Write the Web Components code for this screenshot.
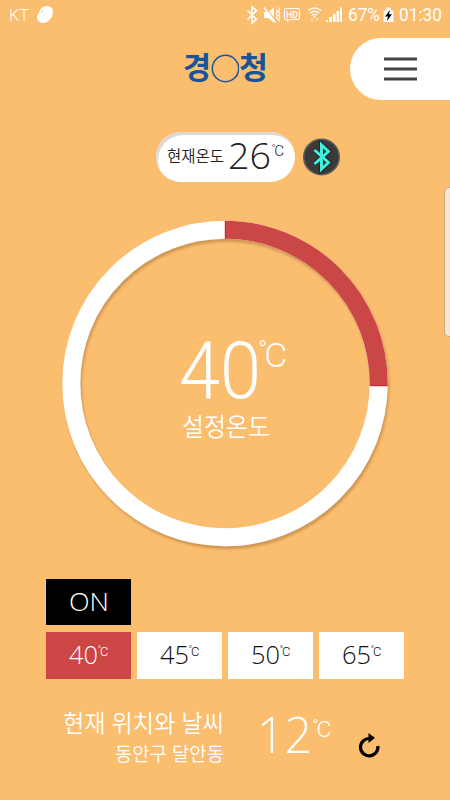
<!DOCTYPE html>
<html lang="ko">
<head>
<meta charset="utf-8">
<title>온도 조절</title>
<style>
html,body{margin:0;height:100%;background:#fbbd6e}
body{font-family:"Open Sans","Noto Sans CJK KR",sans-serif;overflow:hidden}
</style>
</head>
<body>
<heat-app></heat-app>
<script>
const define = (name, html) => {
  const t = document.createElement('template');
  t.innerHTML = html;
  customElements.define(name, class extends HTMLElement {
    constructor() {
      super();
      this.attachShadow({mode: 'open'}).append(t.content.cloneNode(true));
    }
  });
};

/* One line of text stretched to a given advance width. */
customElements.define('fit-text', class extends HTMLElement {
  connectedCallback() {
    const a = (n, d) => this.getAttribute(n) || d;
    const root = this.attachShadow({mode: 'open'});
    root.innerHTML = `<style>
      :host{display:block;flex:none;width:${a('len')}px;height:${a('h')}px}
      svg{display:block;overflow:visible}
      text{font-family:${a('font', "'Open Sans'")},'Noto Sans CJK KR',sans-serif;font-weight:${a('weight', '300')};fill:currentColor}
      </style><svg width="${a('len')}" height="${a('h')}"><text x="0" y="${a('base')}" font-size="${a('size')}" textLength="${a('len')}" lengthAdjust="spacingAndGlyphs"></text></svg>`;
    root.querySelector('text').textContent = a('value', '');
  }
});

/* Degree unit: a small ring tucked against a wide, light C. */
customElements.define('deg-unit', class extends HTMLElement {
  connectedCallback() {
    const s = +this.getAttribute('size'), b = +this.getAttribute('base');
    this.attachShadow({mode: 'open'}).innerHTML = `<style>
      :host{display:block;flex:none;width:${s * .86}px;height:${b + 4}px}
      svg{display:block;overflow:visible}
      text{font-family:Roboto,sans-serif;font-weight:300;fill:currentColor}
      </style><svg width="${s * .86}" height="${b + 4}"><text y="${b - .27 * s}" x="${-.03 * s}" font-size="${s * .75}">°<tspan x="${.16 * s}" y="${b}" font-size="${s}" textLength="${.7 * s}" lengthAdjust="spacingAndGlyphs">C</tspan></text></svg>`;
  }
});

define('status-bar', `<style>
:host{display:flex;height:32px;color:#fff;padding-left:9px}
svg{display:block;flex:none}
.gap{flex:1}
.kt{margin-right:7px}
.pct{margin-left:5px}
.clock{margin:0 8px 0 4px}
</style>
<fit-text class="kt" font="Roboto" value="KT" len="20" h="32" base="21" size="17"></fit-text>
<svg width="18" height="32" viewBox="36 0 18 32"><path d="M46 6C50.500 5.500 53.500 8.500 53 12.500C52.500 17.500 48.500 22.800 43.500 23C39.500 23.200 36.800 20.500 37 17C37.200 14.500 39 13.500 39.500 11.500C40.300 8.500 42.500 6.400 46 6z" fill="#fff"/><path d="M41.500 12.500c.2-1.500.9-2.500 2-3.200" stroke="#fbbd6e" fill="none"/></svg>
<span class="gap"></span>
<svg width="97" height="32" viewBox="246 0 97 32" fill="none" stroke="#fff">
<path d="M247.500 10.500l9 9-4.500 3.500V7l4.500 3.500-9 9" stroke-width="1.600"/>
<path d="M264 12h4l6-4.500v15l-6-4.500h-4z" fill="#fff" stroke="none"/><path d="M265 7l11 14.500" stroke="#fbbd6e" stroke-width="1.500"/><path d="M264 7.500l11.500 15" stroke-width="1.500"/><path d="M276.200 9.500l1.300 2-1.300 2 1.300 2-1.300 2 1.300 2m1-12l1.300 2-1.300 2 1.300 2-1.300 2 1.300 2-1.300 2 1.300 2" stroke-width="1.200"/>
<path d="M286 8.500h12q1.500 0 1.500 1.500v8q0 1.500-1.500 1.500h-8.500l-2 2v-2H286q-1.500 0-1.500-1.500v-8q0-1.500 1.500-1.500z" stroke-width="1"/>
<text x="286" y="17.500" font-size="9.500" font-weight="500" font-family="Roboto" textLength="12" lengthAdjust="spacingAndGlyphs" fill="#fff" stroke="none">HD</text>
<path d="M308 10.500q6.500-5 13 0M310 13q4.500-3.500 9 0M312 15.300q2.500-1.800 5 0" stroke-width="1.400"/><path d="M312 18v3.500m-1.500-1.500l1.500 1.500 1.500-1.500M317 21.500V18m-1.500 1.500L317 18l1.500 1.500" stroke-width="1" opacity=".5"/><circle cx="314.500" cy="17" r="1" fill="#fff" stroke="none"/>
<path d="M326 22v-2h2v2zm3.200 0v-5h2.800v5zm3.800 0V14h2.600v8zm3.600 0V11h2.500v11zm3.400 0V7.500h2V22z" fill="#fff" stroke="none"/></svg>
<fit-text class="pct" font="Roboto" weight="400" value="67%" len="32" h="32" base="21.300" size="17.500"></fit-text>
<svg style="margin-left:3px" width="12" height="32" viewBox="383 0 12 32"><path d="M386 7.500h5v3h2.500V22h-10V10.500h2.500z" fill="#fff" opacity=".95"/><path d="M390 10l-5 6.500h3l-1.300 4.800 5.300-7h-3z" fill="#000"/></svg>
<fit-text class="clock" font="Roboto" weight="400" value="01:30" len="43" h="32" base="21.300" size="17.500"></fit-text>`);

define('brand-header', `<style>
:host{display:flex;height:62px;padding:6px 0 0 183px;align-items:flex-start}
svg{display:block;flex:none}
.logo{display:flex;width:84px;padding-top:13px;color:#16549c}
button{all:unset;margin-left:auto;width:100px;height:62px;border-radius:31px 0 0 31px;background:#fff;display:flex;align-items:center}
button svg{margin-left:34px}
</style>
<div class="logo"><fit-text value="경" len="28" h="32" base="28" size="31" weight="700" font="'Noto Sans CJK KR'"></fit-text>
<svg width="28" height="32"><circle cx="14.500" cy="17.500" r="13.200" fill="none" stroke="#16549c" stroke-width="1.500"/></svg>
<fit-text value="청" len="29" h="32" base="28" size="31" weight="700" font="'Noto Sans CJK KR'"></fit-text></div>
<button aria-label="menu"><svg width="33" height="24"><path d="M0 2h33M0 12h33M0 22h33" stroke="#444" stroke-width="3"/></svg></button>`);

define('current-temp', `<style>
:host{display:flex;height:50px;padding:32px 0 0 156px;color:#222}
.pill{box-sizing:border-box;width:139px;height:50px;border-radius:25px;background:#fff;box-shadow:inset 2px 3px 1px #dcd8d4;display:flex;padding-left:11px}
.n{margin-left:4px}.c{margin-left:1px}
svg{display:block;margin-left:8px}
</style>
<div class="pill"><fit-text value="현재온도" len="57" h="50" base="29.500" size="16" weight="350"></fit-text>
<fit-text class="n" value="26" len="43" h="50" base="36.800" size="37"></fit-text>
<deg-unit class="c" base="24" size="14"></deg-unit></div>
<svg width="38" height="50" viewBox="0 0 38 50"><circle cx="18.500" cy="25" r="17.800" fill="#3b3838" stroke="#62605e" stroke-width="1.500"/><path d="M11.500 18L26 30.500l-7.500 7V12.500l7.500 7L11.500 32" fill="none" stroke="#1c2424" stroke-width="4.500"/><path d="M11.500 18L25.500 30.500l-7 6.500V13l7 6.500L11.500 32" fill="none" stroke="#40f0dd" stroke-width="3"/></svg>`);

define('temp-dial', `<style>
:host{display:grid;width:340px;height:340px;margin:30px 0 0 55px;color:#fff}
svg,.read{grid-area:1/1}
svg{display:block}
.read{padding:120px 0 0 124px}
.row{display:flex}
.c{margin-left:-2px}
</style>
<svg width="340" height="340" viewBox="55 212 340 340">
<defs><filter id="s" x="-10%" y="-10%" width="120%" height="120%"><feDropShadow dx="1.500" dy="3" stdDeviation="1" flood-color="#8a5a20" flood-opacity=".38"/></filter></defs>
<g fill="none" stroke-width="18" filter="url(#s)"><circle cx="225" cy="383.500" r="153.700" stroke="#fff"/><path d="M225 229.800A153.700 153.700 0 0 1 378.700 383.500V386" stroke="#cb4645"/></g>
<path d="M225.300 221v18M370 385.700h17.500" stroke="#c32427"/></svg>
<div class="read"><div class="row"><fit-text value="40" len="82" h="80" base="65.500" size="80" font="Roboto"></fit-text>
<deg-unit class="c" base="34.500" size="33"></deg-unit></div>
<fit-text style="margin-left:3px" value="설정온도" len="88" h="34" base="23.500" size="25" weight="350"></fit-text></div>`);

define('temp-button', `<style>
:host{display:flex;width:85px;height:47px;background:#fff;color:#111}
:host([on]){background:#cb4645;color:#fff}
.wrap{display:flex;padding-left:23px}
</style><div class="wrap"><slot></slot><deg-unit base="23.500" size="12"></deg-unit></div>`);

define('temp-controls', `<style>
:host{display:grid;grid-template-columns:repeat(4,85px);gap:7px 6.250px;margin:27px 0 0 45.600px}
.power{grid-column:1/-1;width:85px;height:46px;background:#000;color:#fff;display:flex;padding-left:23px;box-sizing:border-box}
</style>
<div class="power"><fit-text value="ON" len="40" h="46" base="31.500" size="26.500"></fit-text></div>
<temp-button on><fit-text value="40" len="29" h="47" base="31.500" size="25.500"></fit-text></temp-button>
<temp-button><fit-text value="45" len="29" h="47" base="31.500" size="25.500"></fit-text></temp-button>
<temp-button><fit-text value="50" len="29" h="47" base="31.500" size="25.500"></fit-text></temp-button>
<temp-button><fit-text value="65" len="29" h="47" base="31.500" size="25.500"></fit-text></temp-button>`);

define('local-weather', `<style>
:host{display:flex;margin-top:31px;padding-left:62.500px;color:#fff}
.place{width:161px;display:flex;flex-direction:column;align-items:flex-end;margin-right:33.500px}
.c{margin-left:1px}
svg{display:block;margin:22px 0 0 25.500px}
</style>
<div class="place"><fit-text value="현재 위치와 날씨" len="161" h="32" base="22" size="24" weight="350"></fit-text>
<fit-text value="동안구 달안동" len="109" h="26" base="19" size="19.500" weight="350"></fit-text></div>
<fit-text value="12" len="55" h="60" base="43" size="49"></fit-text>
<deg-unit class="c" base="27" size="21.500"></deg-unit>
<svg width="24" height="28" viewBox="357 732 24 28"><path d="M369 738.500A8.700 8.700 0 1 0 377.800 746" fill="none" stroke="#000" stroke-width="3.200"/><path d="M368.500 733l6.500 5-6.500 5z"/></svg>`);

define('heat-app', `<style>
:host{display:flex;flex-direction:column;width:450px;height:800px;background:#fbbd6e;overflow:hidden}
.main{display:flex;flex-direction:column}
.edge{position:absolute;left:444px;top:187px;width:20px;height:148px;border:1px solid #c9ab80;border-radius:5px;background:#fae6d0}
</style>
<status-bar></status-bar><brand-header></brand-header>
<div class="main"><current-temp></current-temp><temp-dial></temp-dial><temp-controls></temp-controls><local-weather></local-weather></div>
<div class="edge"></div>`);
</script>
</body>
</html>
